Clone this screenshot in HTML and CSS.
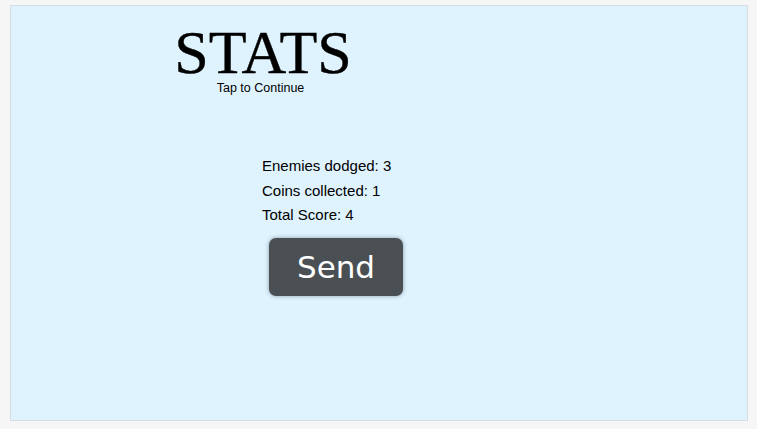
FILE: index.html
```html
<!DOCTYPE html>
<html>
<head>
<meta charset="utf-8">
<link rel="stylesheet" href="styles.css">
</head>
<body>
<div class="panel">
  <div class="header">
    <h1 class="title">STATS</h1>
    <div class="subtitle">Tap to Continue</div>
  </div>
  <div class="stats">
    <div class="line">Enemies dodged: 3</div>
    <div class="line">Coins collected: 1</div>
    <div class="line">Total Score: 4</div>
    <button class="send">Send</button>
  </div>
</div>
</body>
</html>
```
FILE: styles.css
```css
html, body {
  margin: 0;
  padding: 0;
  background: #f6f6f6;
  width: 757px;
  height: 429px;
  overflow: hidden;
}
body {
  padding: 5px 9px 8px 10px;
  box-sizing: border-box;
}
.panel {
  box-sizing: border-box;
  height: 416px;
  background: #dff3fe;
  border: 1px solid #d5dde3;
}
.header {
  width: 174px;
  margin-left: 165px;
  padding-top: 19px;
  display: flex;
  flex-direction: column;
  align-items: center;
}
.title {
  margin: 0;
  font-family: "Liberation Serif", serif;
  font-weight: normal;
  font-size: 62px;
  line-height: 54px;
  color: #000;
  -webkit-text-stroke: 0.4px #000;
}
.subtitle {
  font-family: "Liberation Sans", sans-serif;
  font-size: 12.5px;
  line-height: 14px;
  color: #000;
  margin-top: 2px;
  margin-left: -5px;
}
.stats {
  margin-left: 251px;
  margin-top: 59px;
  display: flex;
  flex-direction: column;
  align-items: flex-start;
}
.line {
  font-family: "Liberation Sans", sans-serif;
  font-size: 15px;
  line-height: 24.5px;
  color: #000;
}
.send {
  margin-top: 10px;
  margin-left: 7px;
  width: 134px;
  height: 58px;
  border: none;
  border-radius: 7px;
  background: #4a4f54;
  color: #fff;
  font-family: "DejaVu Sans", sans-serif;
  font-size: 31px;
  box-shadow: 0 0 4px rgba(40, 50, 60, 0.45);
  padding: 0;
}
```
